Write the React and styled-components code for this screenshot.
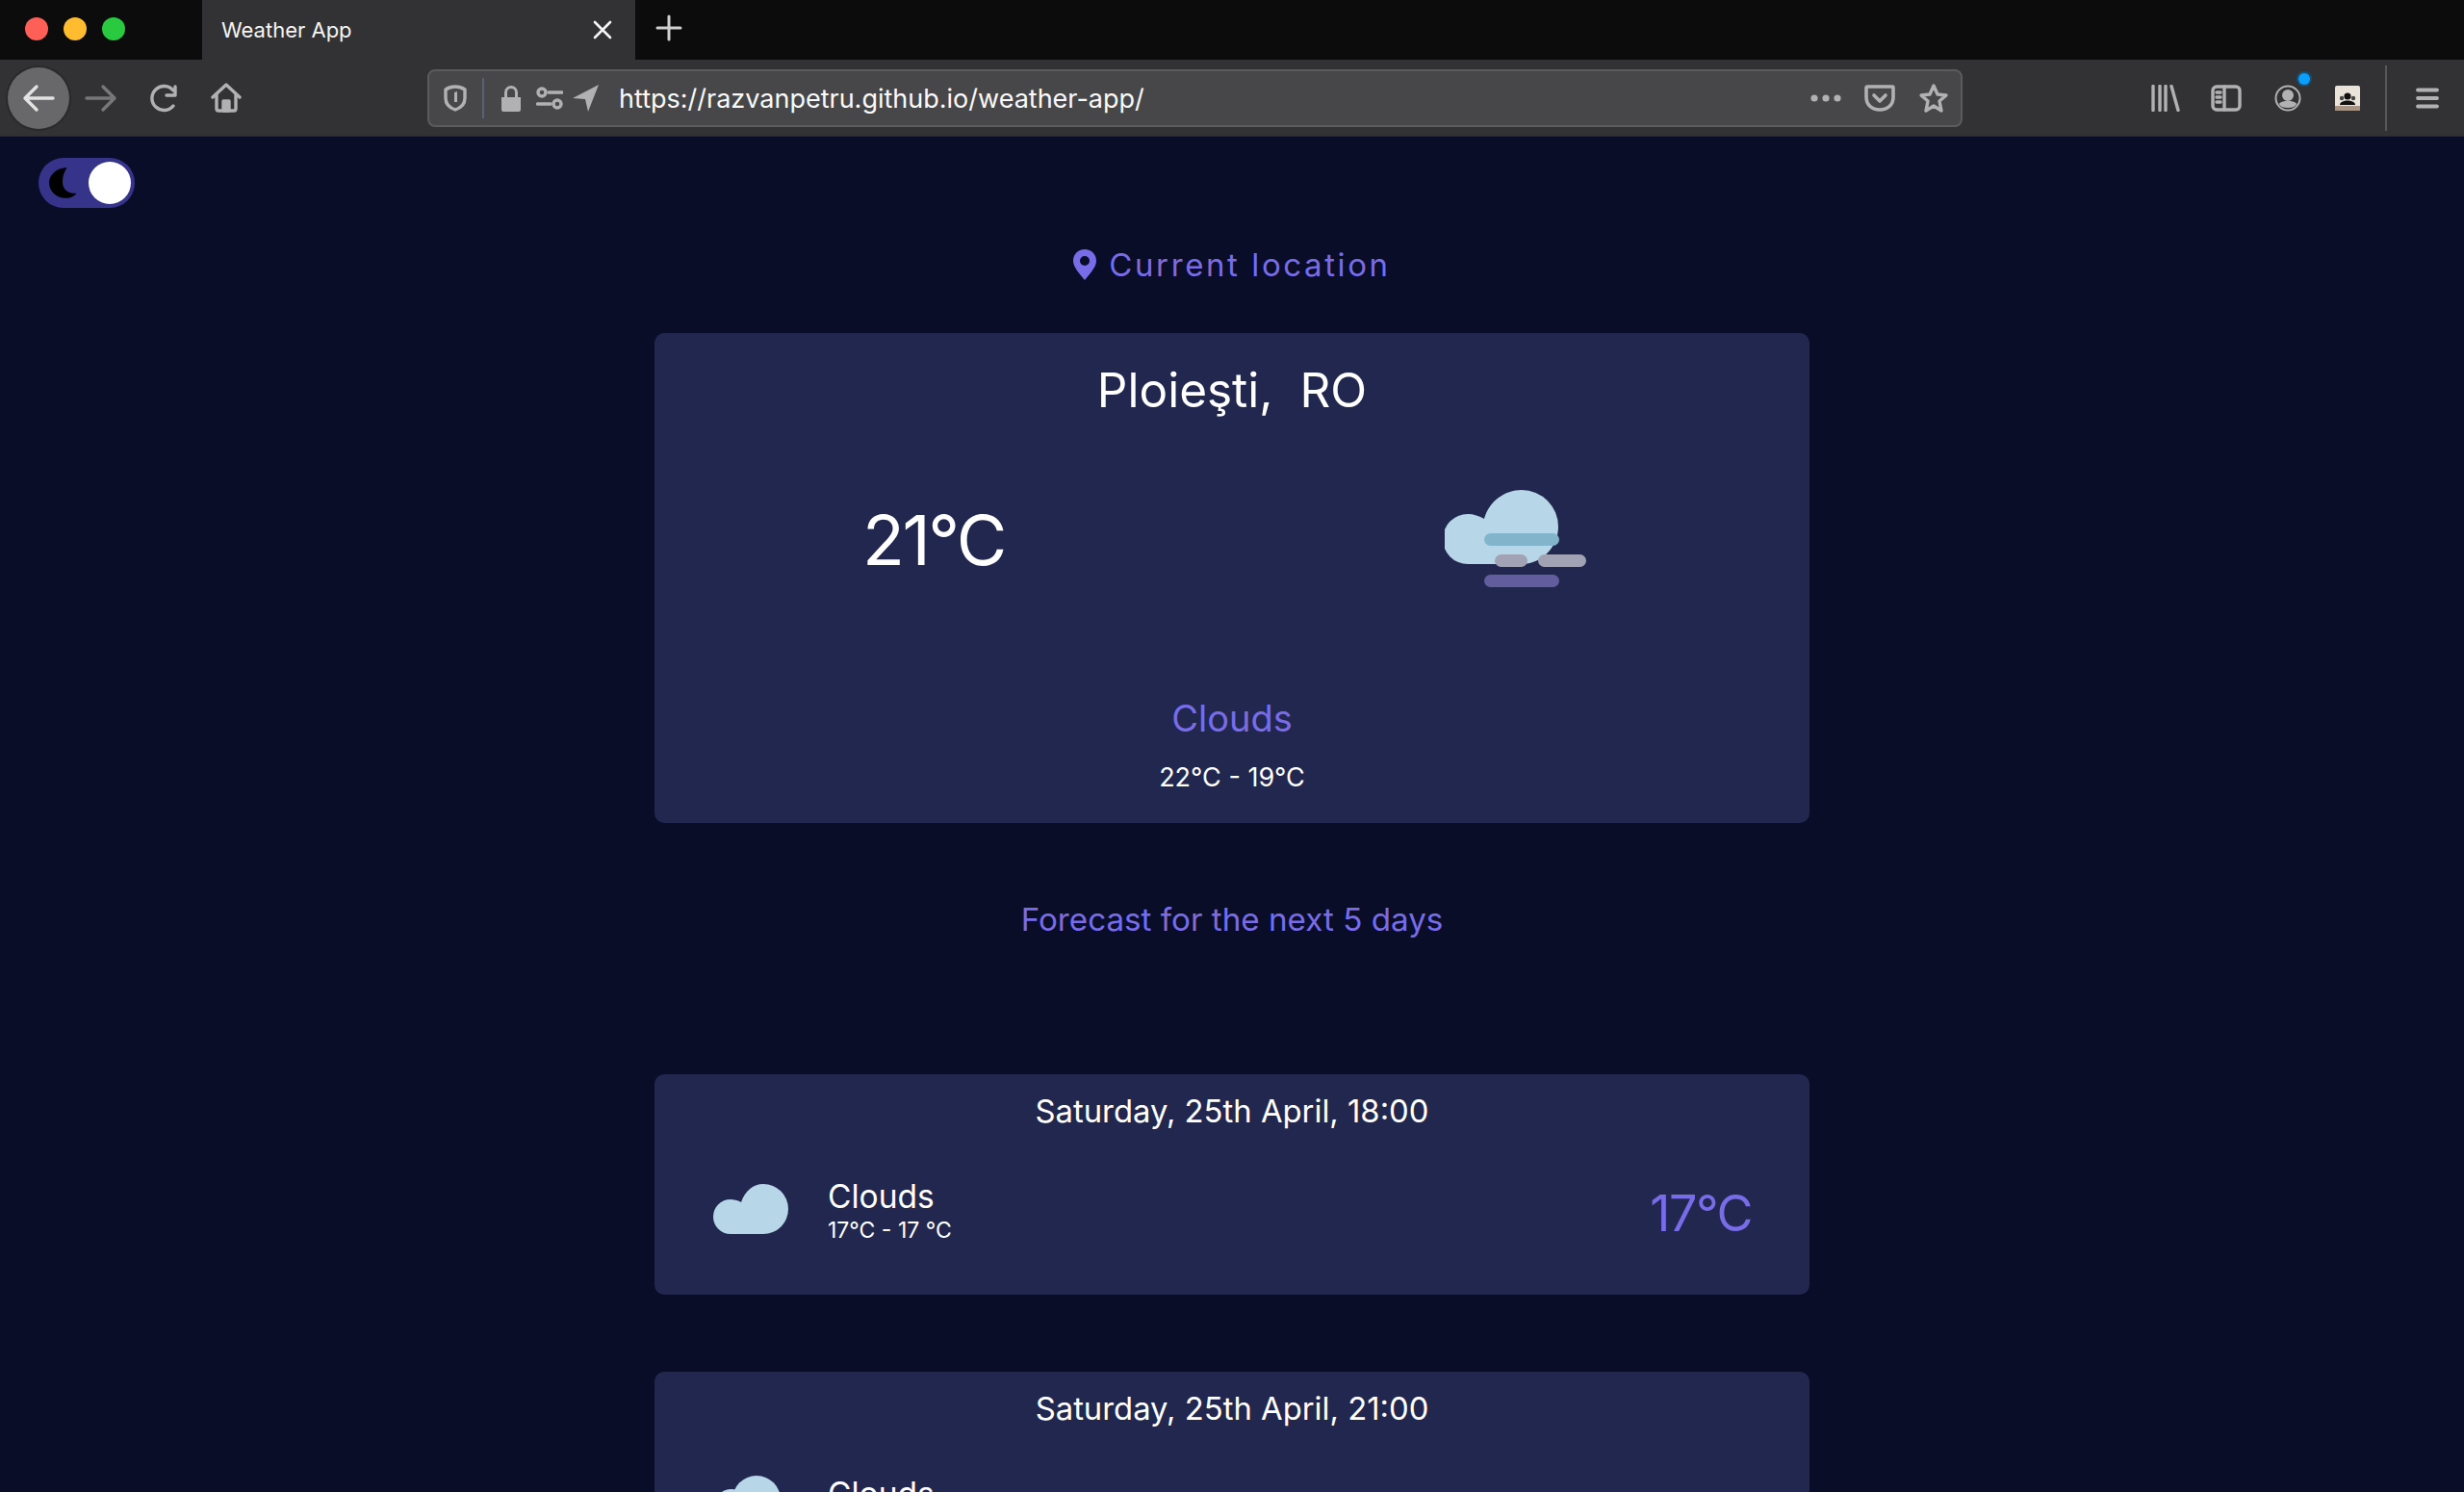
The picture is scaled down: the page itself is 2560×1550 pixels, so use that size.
import React from "react"
import styled, { createGlobalStyle } from "styled-components"

const forecasts = [
  { date: "Saturday, 25th April, 18:00", range: "17°C - 17 °C", temp: "17°C", night: false },
  { date: "Saturday, 25th April, 21:00", range: "15°C - 15 °C", temp: "15°C", night: true },
]

const TrafficLights = () => (
  <Lights>
    <Light $color="#fe5f57" />
    <Light $color="#febc2e" />
    <Light $color="#29c940" />
  </Lights>
)

const Line = ({ children, w, h, sw = 3, fill = "none", color = "#b1b1b3" }) => (
  <svg width={w} height={h} viewBox={`0 0 ${w} ${h}`} fill={fill} stroke={fill === "none" ? color : "none"} strokeWidth={sw} strokeLinecap="round" strokeLinejoin="round">
    {children}
  </svg>
)

const FogCloud = () => (
  <FogIcon width="150" height="110" viewBox="0 0 150 110">
    <path d="M24 82a26 26 0 0 1 0-52c6 0 12 2 17 5 5-18 21-30 39-30a38 38 0 0 1 38 38c0 22-18 39-38 39z" fill="#b7d7e8" />
    <rect x="41" y="50" width="78" height="13" rx="6.5" fill="#82b4cc" />
    <rect x="52" y="72" width="34" height="13" rx="6.5" fill="#a1a3b5" />
    <rect x="97" y="72" width="50" height="13" rx="6.5" fill="#a1a3b5" />
    <rect x="41" y="93" width="78" height="13" rx="6.5" fill="#625d9c" />
  </FogIcon>
)

const SmallCloud = ({ night }) => (
  <CloudIcon width="78" height="52" viewBox="0 0 78 52">
    {night ? (
      <g fill="#b7d7e8">
        <circle cx="45" cy="19" r="25" />
        <circle cx="19" cy="26" r="18" />
      </g>
    ) : (
      <path d="M18 52a18 18 0 0 1 0-36c3 0 8 1 11 3C33 7 42 0 52 0a26 26 0 0 1 0 52z" fill="#b7d7e8" />
    )}
  </CloudIcon>
)

const Browser = () => (
  <>
    <TabStrip>
      <TrafficLights />
      <Tab>
        <TabTitle>Weather App</TabTitle>
        <Line w={20} h={20} sw={2.6} color="#f4f4f5"><path d="M2 2l16 16M18 2L2 18" /></Line>
      </Tab>
      <NewTab>
        <Line w={28} h={28} sw={3} color="#d0d0d2"><path d="M14 2v24M2 14h24" /></Line>
      </NewTab>
    </TabStrip>
    <Toolbar>
      <BackButton>
        <Line w={34} h={30} sw={3.4} color="#e2e2e3"><path d="M32 15H3M15 3L3 15l12 12" /></Line>
      </BackButton>
      <Slot $w={34} $ml={16}>
        <Line w={34} h={30} sw={3.4} color="#77777a"><path d="M2 15h29M19 3l12 12-12 12" /></Line>
      </Slot>
      <Slot $w={30} $ml={34}>
        <Line w={30} h={30} sw={3.4}><path d="M24 23a12.5 12.5 0 1 1 0-16M26 3v9h-9" /></Line>
      </Slot>
      <Slot $w={32} $ml={33}>
        <Line w={32} h={32} sw={3.4}><path d="M2 15L16 2l14 13M6 12v15a2 2 0 0 0 2 2h16a2 2 0 0 0 2-2V12" /><rect x="13" y="19" width="6" height="10" fill="#b1b1b3" /></Line>
      </Slot>
      <UrlBar>
        <Slot $w={24} $ml={15}>
          <Line w={24} h={28} sw={3.4}><path d="M12 2c4 0 7 1 10 3v9c0 6-4 10-10 12C6 24 2 20 2 14V5c3-2 6-3 10-3z" /><path d="M11 8l3-1v11h-3z" fill="#b1b1b3" stroke="none" /></Line>
        </Slot>
        <Separator />
        <Slot $w={24} $ml={16}>
          <Line w={24} h={28} fill="#b1b1b3">
            <path d="M2 13h3V8a7 7 0 0 1 14 0v5h3v13a2 2 0 0 1-2 2H4a2 2 0 0 1-2-2zM8 13h8V8a4 4 0 0 0-8 0z" fillRule="evenodd" />
          </Line>
        </Slot>
        <Slot $w={28} $ml={14}>
          <Line w={28} h={24} sw={3.4}>
            <circle cx="6" cy="6" r="4" />
            <path d="M13 6h14M1.5 18H15" />
            <circle cx="22" cy="18" r="4" />
          </Line>
        </Slot>
        <Slot $w={27} $ml={10}>
          <Line w={27} h={28} fill="#b1b1b3"><path d="M27 0L0 14l13 1 3 13z" /></Line>
        </Slot>
        <Url>https://razvanpetru.github.io/weather-app/</Url>
        <Slot $w={32} $ml={0}>
          <Line w={32} h={8} fill="#b1b1b3">
            <circle cx="4" cy="4" r="3.6" />
            <circle cx="16" cy="4" r="3.6" />
            <circle cx="28" cy="4" r="3.6" />
          </Line>
        </Slot>
        <Slot $w={32} $ml={24}>
          <Line w={32} h={28} sw={3.6}><path d="M3 2h26a1 1 0 0 1 1 1v10c0 8-6 13-14 13S2 21 2 13V3a1 1 0 0 1 1-1z" /><path d="M10 11l6 6 6-6" /></Line>
        </Slot>
        <Slot $w={32} $ml={24}>
          <Line w={32} h={32} sw={3.4}><path d="M16 3l4 9 9 1-7 6 2 10-8-5-8 5 2-10-7-6 9-1z" /></Line>
        </Slot>
      </UrlBar>
      <Slot $w={30} $ml={196}>
        <Line w={30} h={28} sw={3.4}><path d="M2 1.5v25M9 1.5v25M15 1.5v25M21 1.5l7 25" /></Line>
      </Slot>
      <Slot $w={32} $ml={32}>
        <Line w={32} h={28} sw={3.4}><rect x="2" y="2" width="28" height="24" rx="4" /><path d="M14 2v24M6 8h4M6 13h4M6 18h4" /></Line>
      </Slot>
      <AccountSlot>
        <Line w={28} h={28} sw={2}>
          <circle cx="14" cy="14" r="12.5" />
          <circle cx="14" cy="11" r="5" fill="#b1b1b3" />
          <path d="M6 20c3-3 13-3 16 0-2 4-14 4-16 0z" fill="#b1b1b3" />
        </Line>
        <Badge />
      </AccountSlot>
      <Slot $w={26} $ml={35}>
        <svg width="26" height="26" viewBox="0 0 26 26">
          <rect width="26" height="26" rx="2" fill="#e9e3da" />
          <rect y="21" width="26" height="5" fill="#a89484" />
          <circle cx="13" cy="11" r="3.6" fill="#111" />
          <circle cx="7" cy="13" r="2.2" fill="#444" />
          <circle cx="19" cy="13" r="2.2" fill="#444" />
          <path d="M5 20c0-6 16-6 16 0z" fill="#111" />
        </svg>
      </Slot>
      <ToolbarDivider />
      <Slot $w={24} $ml={30}>
        <Line w={24} h={22} sw={3.8}><path d="M2 2.5h20M2 11h20M2 19.5h20" /></Line>
      </Slot>
    </Toolbar>
  </>
)

const ForecastTile = ({ item }) => (
  <ForecastCard>
    <ForecastDate>{item.date}</ForecastDate>
    <ForecastBody>
      <SmallCloud night={item.night} />
      <ForecastText>
        <ForecastName>Clouds</ForecastName>
        <ForecastRange>{item.range}</ForecastRange>
      </ForecastText>
      <ForecastTemp>{item.temp}</ForecastTemp>
    </ForecastBody>
  </ForecastCard>
)

const App = () => (
  <>
    <GlobalStyle />
    <Window>
      <Browser />
      <Page>
        <Switch>
          <svg viewBox="0 0 30 36" width="28" height="34">
            <path d="M20 1C8 1 0 9 0 18s8 17 18 17c6 0 10-2 13-6-9 2-16-3-16-12 0-7 2-12 5-16z" fill="#000" />
          </svg>
          <Knob />
        </Switch>
        <Location>
          <svg width="24" height="32" viewBox="0 0 24 32">
            <path d="M12 0C5 0 0 5 0 12c0 7 8 15 12 20 4-5 12-13 12-20C24 5 19 0 12 0zm0 17a5 5 0 1 1 0-10 5 5 0 0 1 0 10z" fill="#786ce9" fillRule="evenodd" />
          </svg>
          <span>Current location</span>
        </Location>
        <MainCard>
          <City>Ploieşti,&nbsp; RO</City>
          <MainRow>
            <MainTemp>21°C</MainTemp>
            <FogCloud />
          </MainRow>
          <MainDescription>Clouds</MainDescription>
          <MainRange>22°C - 19°C</MainRange>
        </MainCard>
        <ForecastHeading>Forecast for the next 5 days</ForecastHeading>
        {forecasts.map((item) => (
          <ForecastTile key={item.date} item={item} />
        ))}
      </Page>
    </Window>
  </>
)

export default App

const GlobalStyle = createGlobalStyle`
  html, body {
    margin: 0;
    padding: 0;
    overflow: hidden;
    background: #090d28;
    font-family: "Inter", "Noto Sans", sans-serif;
  }
`

const Window = styled.div`
  width: 2560px;
  height: 1550px;
  display: flex;
  flex-direction: column;
  overflow: hidden;
`

const TabStrip = styled.div`
  height: 62px;
  flex: none;
  display: flex;
  background: #0c0c0d;
`

const Lights = styled.div`
  width: 210px;
  display: flex;
  align-items: center;
  gap: 16px;
  padding: 0 0 3px 26px;
  box-sizing: border-box;
`

const Light = styled.div`
  width: 24px;
  height: 24px;
  border-radius: 50%;
  background: ${(p) => p.$color};
`

const Tab = styled.div`
  width: 450px;
  display: flex;
  align-items: center;
  justify-content: space-between;
  padding: 0 24px 0 20px;
  box-sizing: border-box;
  background: #323234;
`

const TabTitle = styled.span`
  font-family: "Inter", sans-serif;
  font-size: 22px;
  color: #f4f4f5;
`

const NewTab = styled.div`
  display: flex;
  align-items: center;
  padding: 0 0 4px 21px;
`

const Toolbar = styled.div`
  height: 80px;
  flex: none;
  display: flex;
  align-items: center;
  position: relative;
  background: #323234;
  border-bottom: 1px solid #2a2a2e;
  box-sizing: border-box;
  padding-left: 8px;
`

const BackButton = styled.div`
  width: 64px;
  height: 64px;
  border-radius: 50%;
  display: flex;
  align-items: center;
  justify-content: center;
  background: #68686a;
  box-shadow: 0 0 0 2px #2a2a2c;
`

const Slot = styled.div`
  width: ${(p) => p.$w}px;
  margin-left: ${(p) => p.$ml}px;
  flex: none;
  display: flex;
  align-items: center;
  justify-content: center;
`

const AccountSlot = styled(Slot).attrs({ $w: 28, $ml: 34 })`
  position: relative;
`

const Badge = styled.div`
  position: absolute;
  top: -12px;
  right: -9px;
  width: 12px;
  height: 12px;
  border-radius: 50%;
  background: #0a9fff;
  box-shadow: 0 0 0 2px #1c4d6b;
`

const UrlBar = styled.div`
  width: 1595px;
  height: 60px;
  margin-left: 193px;
  flex: none;
  display: flex;
  align-items: center;
  box-sizing: border-box;
  padding-right: 12px;
  background: #474749;
  border: 2px solid #5b5b5e;
  border-radius: 8px;
`

const Separator = styled.div`
  width: 2px;
  height: 42px;
  margin-left: 16px;
  background: #58607a;
`

const Url = styled.div`
  flex: 1;
  margin: 2px 0 0 21px;
  font-family: "Inter", sans-serif;
  font-size: 27px;
  color: #f9f9fa;
  white-space: nowrap;
`

const ToolbarDivider = styled.div`
  width: 2px;
  height: 68px;
  margin-left: 26px;
  background: #58585b;
`

const Page = styled.main`
  flex: 1;
  display: flex;
  flex-direction: column;
  align-items: center;
  overflow: hidden;
  padding-top: 22px;
  background: #090d28;
  font-family: "Inter", sans-serif;
`

const Switch = styled.div`
  align-self: flex-start;
  width: 100px;
  height: 52px;
  margin-left: 40px;
  flex: none;
  display: flex;
  align-items: center;
  justify-content: space-between;
  padding: 0 4px 0 11px;
  box-sizing: border-box;
  border-radius: 26px;
  background: #35348a;
`

const Knob = styled.div`
  width: 44px;
  height: 44px;
  border-radius: 50%;
  background: #fff;
`

const Location = styled.div`
  height: 40px;
  margin: 39px 0 51px;
  flex: none;
  display: flex;
  align-items: center;
  gap: 13px;
  font-size: 33px;
  letter-spacing: 2.6px;
  color: #786ce9;
`

const Card = styled.section`
  width: 1200px;
  flex: none;
  box-sizing: border-box;
  border-radius: 10px;
  background: #21274f;
  color: #fff;
`

const MainCard = styled(Card)`
  padding: 29px 0 29px;
  text-align: center;
`

const City = styled.h1`
  margin: 0;
  font-size: 49.5px;
  line-height: 60px;
  font-weight: 400;
`

const MainRow = styled.div`
  height: 150px;
  margin-top: 50px;
  display: grid;
  grid-template-columns: 1fr 1fr;
  align-items: center;
  justify-items: center;
`

const MainTemp = styled.div`
  font-size: 72px;
  letter-spacing: -2.5px;
  margin-right: 20px;
`

const FogIcon = styled.svg`
  margin: -2px 9px 0 0;
`

const MainDescription = styled.div`
  margin-top: 88px;
  font-size: 38px;
  line-height: 46px;
  color: #786ce9;
`

const MainRange = styled.div`
  margin-top: 21px;
  font-size: 27px;
  line-height: 36px;
`

const ForecastHeading = styled.h2`
  height: 44px;
  margin: 78px 0 139px;
  flex: none;
  font-size: 33.2px;
  line-height: 44px;
  font-weight: 400;
  color: #786ce9;
`

const ForecastCard = styled(Card)`
  padding: 19px 60px 41px;
  margin-bottom: 80px;
`

const ForecastDate = styled.div`
  font-size: 32.8px;
  line-height: 38px;
  padding-bottom: 2px;
  text-align: center;
`

const ForecastBody = styled.div`
  height: 96px;
  margin-top: 33px;
  display: flex;
  align-items: center;
`

const CloudIcon = styled.svg`
  flex: none;
  overflow: visible;
  margin-left: 1px;
`

const ForecastText = styled.div`
  flex: 1;
  margin: 4px 0 0 41px;
`

const ForecastName = styled.div`
  font-size: 33.5px;
  line-height: 40px;
`

const ForecastRange = styled.div`
  font-size: 23px;
  line-height: 31px;
`

const ForecastTemp = styled.div`
  font-size: 52px;
  letter-spacing: -1.5px;
  margin-top: 8px;
  color: #786ce9;
`
